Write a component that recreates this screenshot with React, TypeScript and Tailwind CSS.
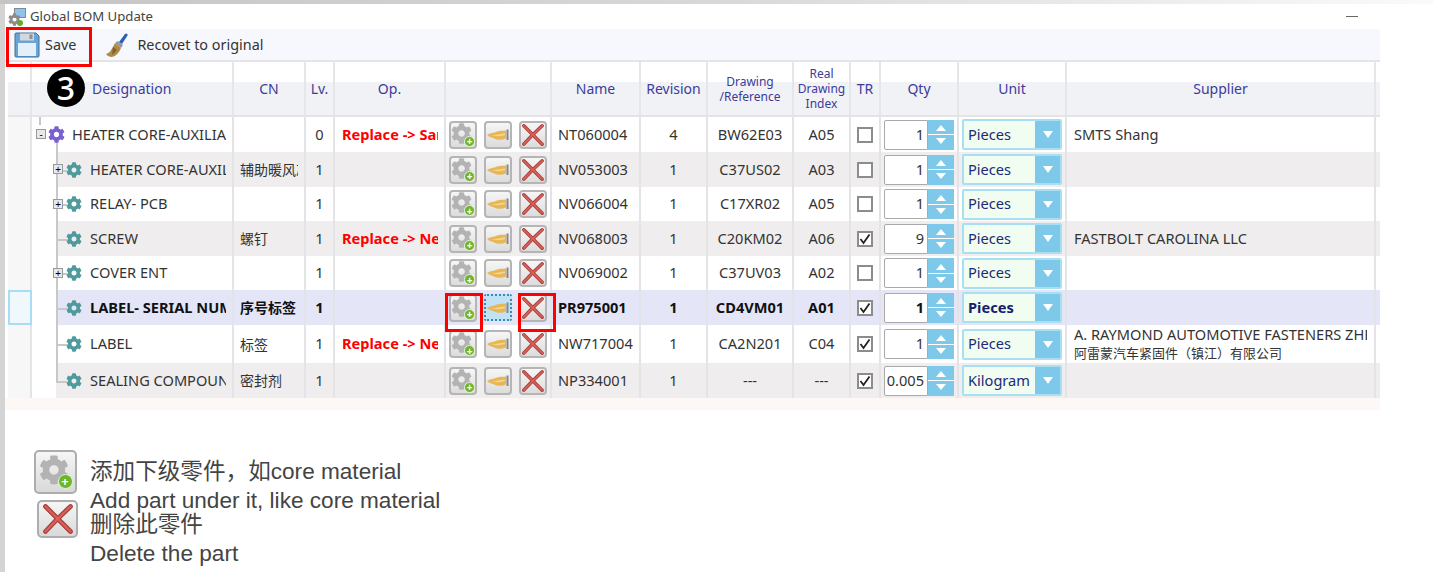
import { FaCog } from "react-icons/fa";

const gridCols =
  "grid grid-cols-[24px_202px_72px_29px_111px_106px_89px_67px_86px_57px_30px_78px_108px_309px_4px]";

const rows = [
  { name: "HEATER CORE-AUXILIARY", cn: "", lv: "0", op: "Replace -> Same", part: "NT060004", rev: "4", draw: "BW62E03", idx: "A05", tr: false, qty: "1", unit: "Pieces", sup: "SMTS Shang", h: "h-[35px]", root: true, exp: "-" },
  { name: "HEATER CORE-AUXILIARY", cn: "辅助暖风芯体", lv: "1", op: "", part: "NV053003", rev: "1", draw: "C37US02", idx: "A03", tr: false, qty: "1", unit: "Pieces", sup: "", h: "h-[35px]", exp: "+" },
  { name: "RELAY- PCB", cn: "", lv: "1", op: "", part: "NV066004", rev: "1", draw: "C17XR02", idx: "A05", tr: false, qty: "1", unit: "Pieces", sup: "", h: "h-[34px]", exp: "+" },
  { name: "SCREW", cn: "螺钉", lv: "1", op: "Replace -> New", part: "NV068003", rev: "1", draw: "C20KM02", idx: "A06", tr: true, qty: "9", unit: "Pieces", sup: "FASTBOLT CAROLINA LLC", h: "h-[35px]" },
  { name: "COVER ENT", cn: "", lv: "1", op: "", part: "NV069002", rev: "1", draw: "C37UV03", idx: "A02", tr: false, qty: "1", unit: "Pieces", sup: "", h: "h-[34px]", exp: "+" },
  { name: "LABEL- SERIAL NUMBER", cn: "序号标签", lv: "1", op: "", part: "PR975001", rev: "1", draw: "CD4VM01", idx: "A01", tr: true, qty: "1", unit: "Pieces", sup: "", h: "h-[35px]", selected: true },
  { name: "LABEL", cn: "标签", lv: "1", op: "Replace -> New", part: "NW717004", rev: "1", draw: "CA2N201", idx: "C04", tr: true, qty: "1", unit: "Pieces", sup: "A. RAYMOND AUTOMOTIVE FASTENERS ZHENJIANG", sup2: "阿雷蒙汽车紧固件（镇江）有限公司", h: "h-[38px]" },
  { name: "SEALING COMPOUND", cn: "密封剂", lv: "1", op: "", part: "NP334001", rev: "1", draw: "---", idx: "---", tr: true, qty: "0.005", unit: "Kilogram", sup: "", h: "h-[35px]", last: true },
];

function GearPlus({ big }: { big?: boolean }) {
  return (
    <span className={big ? "relative block w-[34px] h-[34px]" : "relative block w-[24px] h-[24px]"}>
      <FaCog className="w-[88%] h-[88%] text-[#b3b3b3]" />
      <span className={big ? "absolute right-0 bottom-0 w-[15px] h-[15px] rounded-full bg-[#6cb52d] border border-[#e8f5d8] flex items-center justify-center text-white text-[13px] font-bold leading-none" : "absolute right-0 bottom-0 w-[11px] h-[11px] rounded-full bg-[#6cb52d] border border-[#e8f5d8] flex items-center justify-center text-white text-[10px] font-bold leading-none"}>
        +
      </span>
    </span>
  );
}

function RedX({ size }: { size: number }) {
  return (
    <svg width={size} height={size} viewBox="0 0 24 24" fill="none" strokeLinecap="round">
      <path d="M2 2 Q10 10 22 22 M22 2 Q11 12 2 22" stroke="#a8403b" strokeWidth="3.8" />
      <path d="M2 2 Q10 10 22 22 M22 2 Q11 12 2 22" stroke="#d9605a" strokeWidth="1.8" />
    </svg>
  );
}

function Hand() {
  return (
    <svg width="24" height="14" viewBox="0 0 24 14">
      <path d="M1 7 C4 5 8 5 11 3.5 C14 2.5 17 3 20 2.5 L20 10.5 C15 12.5 11 12 8 10.5 C6 9.5 3 9 1 7z" fill="#e8b657" />
      <path d="M5 7 C9 7.5 13 6.5 19 5.5 L19 7 C14 8.5 9 8.5 5 7z" fill="#f4d88f" />
      <rect x="20.5" y="1.5" width="2" height="10.5" fill="#85858a" />
    </svg>
  );
}

function ActionBtn({ children, focused }: { children: React.ReactNode; focused?: boolean }) {
  return (
    <div
      className={
        focused
          ? "w-[28px] h-[27px] rounded-[2px] border-2 border-dotted border-[#3f87b5] bg-[#bfe3f5] flex items-center justify-center"
          : "w-[28px] h-[28px] rounded-[4px] border-2 border-[#b5b5b5] bg-gradient-to-b from-[#f6f6f6] to-[#dcdcdc] flex items-center justify-center"
      }
    >
      {children}
    </div>
  );
}

function Floppy() {
  return (
    <svg width="26" height="26" viewBox="0 0 26 26">
      <path d="M2 1 H22 L25 4 V24 a1 1 0 0 1 -1 1 H2 a1 1 0 0 1 -1 -1 V2 a1 1 0 0 1 1 -1z" fill="#69a4d6" stroke="#41719f" />
      <rect x="6" y="1.5" width="14" height="7" fill="#d4d8dc" />
      <rect x="15.5" y="2.5" width="3" height="4.5" fill="#8a9099" />
      <rect x="4" y="11" width="18" height="13" fill="#e3effb" />
    </svg>
  );
}

function Brush() {
  return (
    <svg width="24" height="26" viewBox="0 0 24 26">
      <path d="M14 10 L20 2 C21 0.5 23.5 2 22.5 3.6 L17 12z" fill="#2f5fb3" />
      <path d="M13 9 L18 13 L16 16 L10 11z" fill="#8f98a3" />
      <path d="M10 11 L16 16 C14 21 11 24 7 25 C5 25 2 24 1 22 C5 21 7 17 10 11z" fill="#b08a45" />
      <path d="M8 15 L12 18 L7 23z" fill="#7e6130" />
    </svg>
  );
}

function TitleIcon() {
  return (
    <span className="relative block w-[18px] h-[18px]">
      <span className="absolute right-0 top-0 w-[12px] h-[10px] bg-[#8fc4e8] border border-[#7b8a96]" />
      <FaCog className="absolute left-0 bottom-0 w-[13px] h-[13px] text-[#8b8b8b]" />
      <span className="absolute right-[3px] bottom-0 w-[6px] h-[6px] rounded-full bg-[#62ad2c]" />
    </span>
  );
}

function HeaderCell({ children, small }: { children: React.ReactNode; small?: boolean }) {
  return (
    <div
      className={
        small
          ? "border-r-2 border-[#e6e6e8] flex items-center justify-center text-center text-[12px] leading-[15px] text-[#3b3b9c]"
          : "border-r-2 border-[#e6e6e8] flex items-center justify-center text-center text-[14px] text-[#3b3b9c]"
      }
    >
      {children}
    </div>
  );
}

function Row({ r, alt }: { r: (typeof rows)[number]; alt: boolean }) {
  const bg = r.selected ? "bg-[#e4e6f8]" : alt ? "bg-[#efeded]" : "bg-white";
  const weight = r.selected ? "font-bold text-[#111]" : "text-[#333]";
  const cell = "border-r-2 border-[#e4e4e6] flex items-center overflow-hidden whitespace-nowrap";
  return (
    <div className={`${gridCols} ${r.h} text-[14.6px] ${weight}`}>
      <div
        className={
          r.selected
            ? "ml-0 border-2 border-[#a9dcf5] bg-[#eef8fd]"
            : "border-r-2 border-[#e4e4e6] bg-[#f7f7f8]"
        }
      />
      <div className={`${cell} relative ${r.root ? "pl-[16px]" : "pl-[34px]"} bg-white`}>
        <div className={`absolute inset-y-0 left-[24px] right-0 ${bg} ${r.root ? "hidden" : ""}`} />
        <div className={`absolute inset-y-0 left-0 right-0 ${r.root ? bg : "hidden"}`} />
        {/* tree lines */}
        {r.root ? (
          <>
            <span className="absolute left-[7px] top-0 h-[8px] w-[2px] bg-[#c8c8c8]" />
            <span className="absolute left-[24px] top-[24px] bottom-0 w-[2px] bg-[#c8c8c8]" />
          </>
        ) : (
          <>
            <span className={r.last ? "absolute left-[24px] top-0 h-1/2 w-[2px] bg-[#c8c8c8]" : "absolute left-[24px] inset-y-0 w-[2px] bg-[#c8c8c8]"} />
            <span className="absolute left-[24px] top-1/2 w-[12px] h-[2px] bg-[#c8c8c8]" />
          </>
        )}
        {r.exp && (
          <span
            className={
              r.root
                ? "absolute left-[4px] top-[12px] w-[10px] h-[10px] border border-[#999] bg-[#e8e8e8] flex items-center justify-center text-[10px] leading-none text-black"
                : "absolute left-[21px] top-[12px] w-[10px] h-[10px] border border-[#999] bg-[#e8e8e8] flex items-center justify-center text-[10px] leading-none text-black"
            }
          >
            {r.exp}
          </span>
        )}
        <FaCog className={r.root ? "relative shrink-0 w-[17px] h-[17px] text-[#7a5fd0]" : "relative shrink-0 w-[16px] h-[16px] text-[#4f9a9c]"} />
        <span className={r.root ? "relative ml-[7px] w-[154px] overflow-hidden" : "relative ml-[8px] w-[136px] overflow-hidden"}>{r.name}</span>
      </div>
      <div className={`${cell} ${bg} pl-[6px]`}>
        <span className="block w-[58px] overflow-hidden text-[14px]">{r.cn}</span>
      </div>
      <div className={`${cell} ${bg} justify-center`}>{r.lv}</div>
      <div className={`${cell} ${bg} pl-[7px] font-bold text-[#ff0000]`}>
        <span className="block w-[96px] overflow-hidden">{r.op}</span>
      </div>
      <div className={`${cell} ${bg} pl-[3px] gap-[7px]`}>
        <ActionBtn><GearPlus /></ActionBtn>
        <ActionBtn focused={r.selected}><Hand /></ActionBtn>
        <ActionBtn><RedX size={22} /></ActionBtn>
      </div>
      <div className={`${cell} ${bg} pl-[6px]`}>{r.part}</div>
      <div className={`${cell} ${bg} justify-center`}>{r.rev}</div>
      <div className={`${cell} ${bg} justify-center`}>{r.draw}</div>
      <div className={`${cell} ${bg} justify-center`}>{r.idx}</div>
      <div className={`${cell} ${bg} justify-center`}>
        <span className="w-[16px] h-[16px] border-2 border-[#8c8c8c] bg-white flex items-center justify-center">
          {r.tr && (
            <svg width="12" height="12" viewBox="0 0 12 12" fill="none">
              <path d="M1.5 6 L4.5 10 L10.5 1.5" stroke="#222" strokeWidth="1.8" />
            </svg>
          )}
        </span>
      </div>
      <div className={`${cell} ${bg} pl-[3px]`}>
        <div className="flex w-[70px] h-[30px]">
          <div className="w-[44px] border border-[#aaa] bg-white flex items-center justify-end pr-[3px] rounded-l-[2px]">{r.qty}</div>
          <div className="w-[26px] bg-[#7ec8ea] flex flex-col items-center justify-center gap-[3px]">
            <span className="w-0 h-0 border-x-[5px] border-x-transparent border-b-[6px] border-b-white" />
            <span className="w-full h-[1px] bg-white" />
            <span className="w-0 h-0 border-x-[5px] border-x-transparent border-t-[6px] border-t-white" />
          </div>
        </div>
      </div>
      <div className={`${cell} ${bg} pl-[3px]`}>
        <div className="flex w-[100px] h-[31px] border-2 border-[#a9dff2] rounded-[2px] bg-[#f0fdf0]">
          <div className={r.selected ? "flex-1 flex items-center pl-[4px] font-bold text-[#14206e]" : "flex-1 flex items-center pl-[4px] text-[#1d2a78]"}>{r.unit}</div>
          <div className="w-[25px] bg-[#7ec8ea] flex items-center justify-center">
            <span className="w-0 h-0 border-x-[5px] border-x-transparent border-t-[7px] border-t-white" />
          </div>
        </div>
      </div>
      <div className={`${cell} ${bg} pl-[7px]`}>
        <div className="w-[293px] overflow-hidden leading-[19px]">
          <div>{r.sup}</div>
          {r.sup2 && <div className="text-[13px]">{r.sup2}</div>}
        </div>
      </div>
      <div className={bg} />
    </div>
  );
}

export default function App() {
  return (
    <div className="relative w-[1433px] h-[572px] overflow-hidden bg-white font-['Noto_Sans','Noto_Sans_CJK_SC',sans-serif]">
      <div className="h-[4px] bg-gradient-to-r from-[#c4c4c4] via-[#d8d8d8] to-[#fafafa]" />
      <div className="border-l-[5px] border-[#d4d4d4] h-[568px]">
        <div className="w-[1375px]">
          {/* title bar */}
          <div className="h-[25px] flex items-center pl-[3px] pr-[22px] text-[13.2px] text-[#444]">
            <TitleIcon />
            <span className="ml-[4px]">Global BOM Update</span>
            <span className="ml-auto w-[12px] h-[1px] bg-[#666]" />
          </div>
          {/* toolbar */}
          <div className="h-[33px] bg-[#f7f8fd] border-b-2 border-[#e4e4e8] flex items-center text-[14.4px] text-[#333]">
            <span className="ml-[9px]"><Floppy /></span>
            <span className="ml-[5px]">Save</span>
            <span className="ml-[29px]"><Brush /></span>
            <span className="ml-[8px]">Recovet to original</span>
          </div>
          {/* table */}
          <div className="ml-[3px]">
            <div className={`${gridCols} h-[55px] bg-gradient-to-b from-white from-[38%] to-[#f1f2f5] to-[38%] border-b-2 border-[#e4e4e6]`}>
              <HeaderCell>{""}</HeaderCell>
              <div className="border-r-2 border-[#e6e6e8] flex items-center pl-[60px] text-[14px] text-[#3b3b9c]">Designation</div>
              <HeaderCell>CN</HeaderCell>
              <HeaderCell>Lv.</HeaderCell>
              <HeaderCell>Op.</HeaderCell>
              <HeaderCell>{""}</HeaderCell>
              <HeaderCell>Name</HeaderCell>
              <HeaderCell>Revision</HeaderCell>
              <HeaderCell small>Drawing<br />/Reference</HeaderCell>
              <HeaderCell small>Real<br />Drawing<br />Index</HeaderCell>
              <HeaderCell>TR</HeaderCell>
              <HeaderCell>Qty</HeaderCell>
              <HeaderCell>Unit</HeaderCell>
              <HeaderCell>Supplier</HeaderCell>
              <div />
            </div>
            {rows.map((r, i) => (
              <Row key={r.part} r={r} alt={i % 2 === 1} />
            ))}
          </div>
          <div className="h-[12px] bg-[#fdf8f6]" />
        </div>
        {/* legend */}
        <div className="flex pl-[29px] pt-[40px]">
          <div className="w-[56px] flex flex-col items-start">
            <div className="w-[43px] h-[44px] rounded-[5px] border-2 border-[#adadad] bg-gradient-to-b from-[#f6f6f6] to-[#d9d9d9] flex items-center justify-center">
              <GearPlus big />
            </div>
            <div className="mt-[6px] ml-[3px] w-[41px] h-[38px] rounded-[5px] border-2 border-[#adadad] bg-gradient-to-b from-[#f6f6f6] to-[#d9d9d9] flex items-center justify-center">
              <RedX size={30} />
            </div>
          </div>
          <div className="font-['Liberation_Sans','Noto_Sans_CJK_SC',sans-serif] text-[22.6px] text-[#444] pt-[6px]">
            <div className="h-[32px] leading-[32px]">添加下级零件，如core material</div>
            <div className="h-[26px] leading-[26px]">Add part under it, like core material</div>
            <div className="h-[22px] leading-[22px]">删除此零件</div>
            <div className="h-[36px] leading-[36px]">Delete the part</div>
          </div>
        </div>
      </div>

      {/* annotations */}
      <div className="absolute left-[6px] top-[27px] w-[86px] h-[40px] border-[3px] border-[#ff0000]" />
      <div className="absolute left-[47px] top-[69px] w-[38px] h-[38px] rounded-full bg-black flex items-center justify-center text-white text-[32px] font-medium leading-none">3</div>
      <div className="absolute left-[445px] top-[293px] w-[38px] h-[39px] border-[3px] border-[#ff0000]" />
      <div className="absolute left-[518px] top-[293px] w-[38px] h-[39px] border-[3px] border-[#ff0000]" />
    </div>
  );
}
